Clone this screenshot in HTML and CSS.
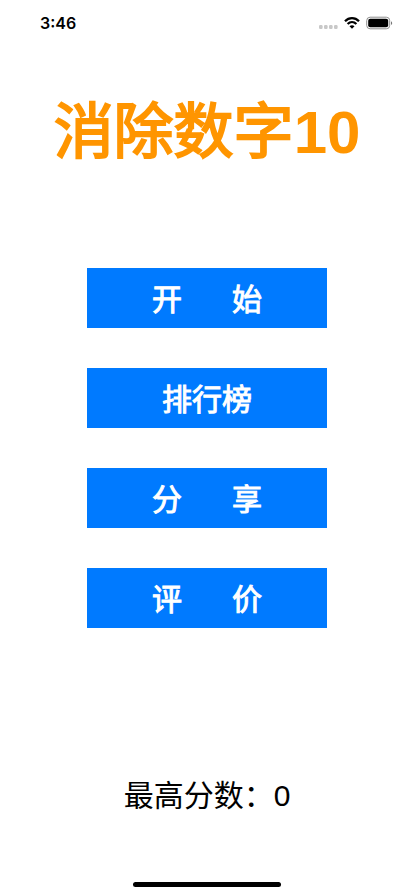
FILE: index.html
```html
<!DOCTYPE html>
<html lang="zh-CN">
<head>
    <meta charset="UTF-8">
    <meta name="viewport" content="width=device-width, initial-scale=1.0">
    <title>消除数字10</title>
    <link rel="stylesheet" href="styles.css">
</head>
<body>
    <header class="status-bar">
        <span class="time">3:46</span>
        <div class="status-icons">
            <svg class="signal" width="20" height="16" viewBox="0 0 20 16" fill="#c8c8c8">
                <rect x="1" y="10" width="3.6" height="4" rx="1.2"/>
                <rect x="6" y="10" width="3.6" height="4" rx="1.2"/>
                <rect x="11" y="10" width="3.6" height="4" rx="1.2"/>
                <rect x="16" y="10" width="3.6" height="4" rx="1.2"/>
            </svg>
            <svg class="wifi" width="16" height="16" viewBox="0 0 16 16" fill="none" stroke="#000" stroke-width="2.3">
                <path d="M1 6.2C5 2.2 11 2.2 15 6.2"/>
                <path d="M3.6 9C6.2 6.5 9.8 6.5 12.4 9"/>
                <path d="M8 13.8L5.5 11.3C6.9 10 9.1 10 10.5 11.3Z" fill="#000" stroke="none"/>
            </svg>
            <svg class="battery" width="27" height="16" viewBox="0 0 27 16">
                <rect x="0.7" y="2.2" width="23" height="11.6" rx="3.4" fill="none" stroke="#8e8e8e"/>
                <rect x="2.2" y="3.7" width="20" height="8.6" rx="2" fill="#000"/>
                <path d="M25 6.2C26.6 6.8 26.6 9.4 25 10Z" fill="#777"/>
            </svg>
        </div>
    </header>

    <main class="home">
        <h1>消除数字<b>10</b></h1>

        <div class="menu">
            <button type="button">开      始</button>
            <button type="button">排行榜</button>
            <button type="button">分      享</button>
            <button type="button">评      价</button>
        </div>

        <p class="best-score">最高分数：0</p>
    </main>

    <div class="home-indicator"></div>
</body>
</html>
```

FILE: styles.css
```css
* {
    box-sizing: border-box;
}

body {
    background-color: #fff;
    color: #000;
    font-family: "Liberation Sans", "Noto Sans CJK SC", sans-serif;
    margin: 0;
    min-height: 100vh;
    display: flex;
    flex-direction: column;
}

.status-bar {
    display: flex;
    justify-content: space-between;
    align-items: center;
    height: 46px;
    padding: 0 21px 0 40px;
}

.time {
    font-family: Inter, sans-serif;
    font-size: 16px;
    font-weight: 600;
    line-height: 20px;
}

.status-icons {
    display: flex;
    align-items: center;
    gap: 6px;
}

.home {
    flex: 1;
    display: flex;
    flex-direction: column;
    align-items: center;
}

/* the outline gives a weight between regular and bold */
h1 {
    color: #ff9500;
    font-size: 60px;
    font-weight: normal;
    line-height: 72px;
    margin: 51px 0 99px;
    white-space: nowrap;
    -webkit-text-stroke: 2px #ff9500;
}

h1 b {
    -webkit-text-stroke: 0;
}

.menu {
    display: flex;
    flex-direction: column;
    gap: 40px;
}

button {
    background-color: #007aff;
    color: #fff;
    border: none;
    border-radius: 0;
    width: 240px;
    height: 60px;
    padding: 4px 0 0;
    font-family: inherit;
    font-size: 30px;
    font-weight: normal;
    line-height: 36px;
    white-space: pre;
    cursor: pointer;
    -webkit-text-stroke: 1px #fff;
}

button:active {
    background-color: #0062cc;
}

.best-score {
    font-size: 30px;
    line-height: 36px;
    margin: auto 0 68px;
}

.home-indicator {
    background-color: #000;
    border-radius: 3px;
    width: 148px;
    height: 5px;
    margin: 0 auto 9px;
}
```
